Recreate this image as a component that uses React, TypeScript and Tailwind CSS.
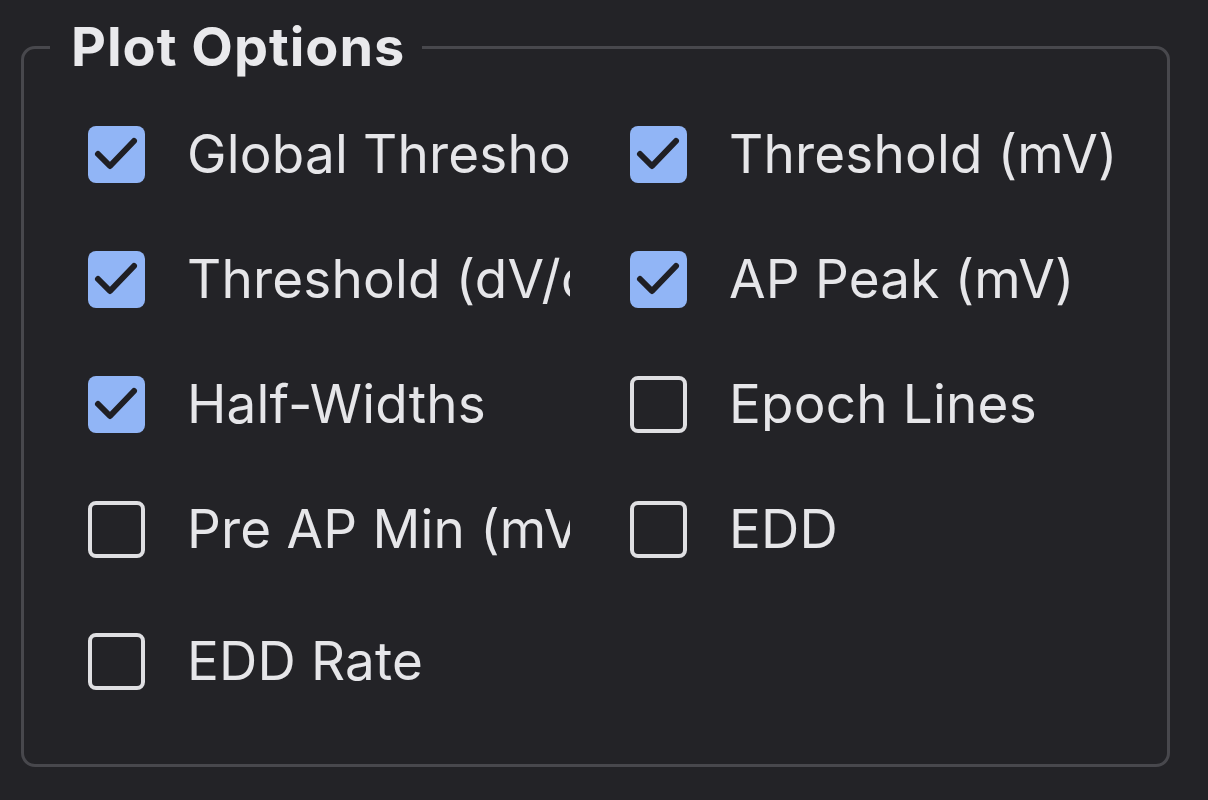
const options = [
  { label: 'Global Threshold', checked: true },
  { label: 'Threshold (mV)', checked: true },
  { label: 'Threshold (dV/dt)', checked: true },
  { label: 'AP Peak (mV)', checked: true },
  { label: 'Half-Widths', checked: true },
  { label: 'Epoch Lines', checked: false },
  { label: 'Pre AP Min (mV)', checked: false },
  { label: 'EDD', checked: false },
  { label: 'EDD Rate', checked: false },
]

function CheckBox({ checked }: { checked: boolean }) {
  if (!checked) {
    return <div className="h-[57px] w-[57px] shrink-0 rounded-[8px] border-[4px] border-[#dfdfe2]" />
  }

  return (
    <div className="flex h-[57px] w-[57px] shrink-0 items-center justify-center rounded-[8px] bg-[#91b5f6]">
      <svg viewBox="0 0 57 57" className="h-[57px] w-[57px]">
        <path
          d="M10 28 L22 40 L46 15"
          fill="none"
          stroke="#1f1f24"
          strokeWidth="6"
          strokeLinecap="round"
          strokeLinejoin="round"
        />
      </svg>
    </div>
  )
}

export default function App() {
  return (
    <div
      className="h-[800px] w-[1208px] bg-[#232327] pl-[21px] pt-[19px]"
      style={{ fontFamily: 'Inter, "Noto Sans", sans-serif' }}
    >
      <fieldset className="w-[1149px] rounded-[14px] border-[3px] border-[#48484d] pb-[74px] pl-[26px]">
        <legend className="pl-[21px] pr-[17px] text-[54px] font-bold leading-[56px] tracking-[1px] text-[#e9e9ec]">
          Plot Options
        </legend>
        <div className="ml-[38px] mt-[51px] grid grid-cols-[542px_1fr] gap-y-[68px]">
          {options.map((opt, i) => (
            <div key={opt.label} className={`flex h-[57px] items-center ${i === 8 ? 'mt-[7px]' : ''}`}>
              <CheckBox checked={opt.checked} />
              <span
                className={`ml-[42px] overflow-hidden whitespace-nowrap text-[53px] leading-none tracking-[0.2px] text-[#e6e6e9] ${
                  i % 2 === 0 ? 'w-[383px]' : ''
                }`}
              >
                {opt.label}
              </span>
            </div>
          ))}
        </div>
      </fieldset>
    </div>
  )
}
